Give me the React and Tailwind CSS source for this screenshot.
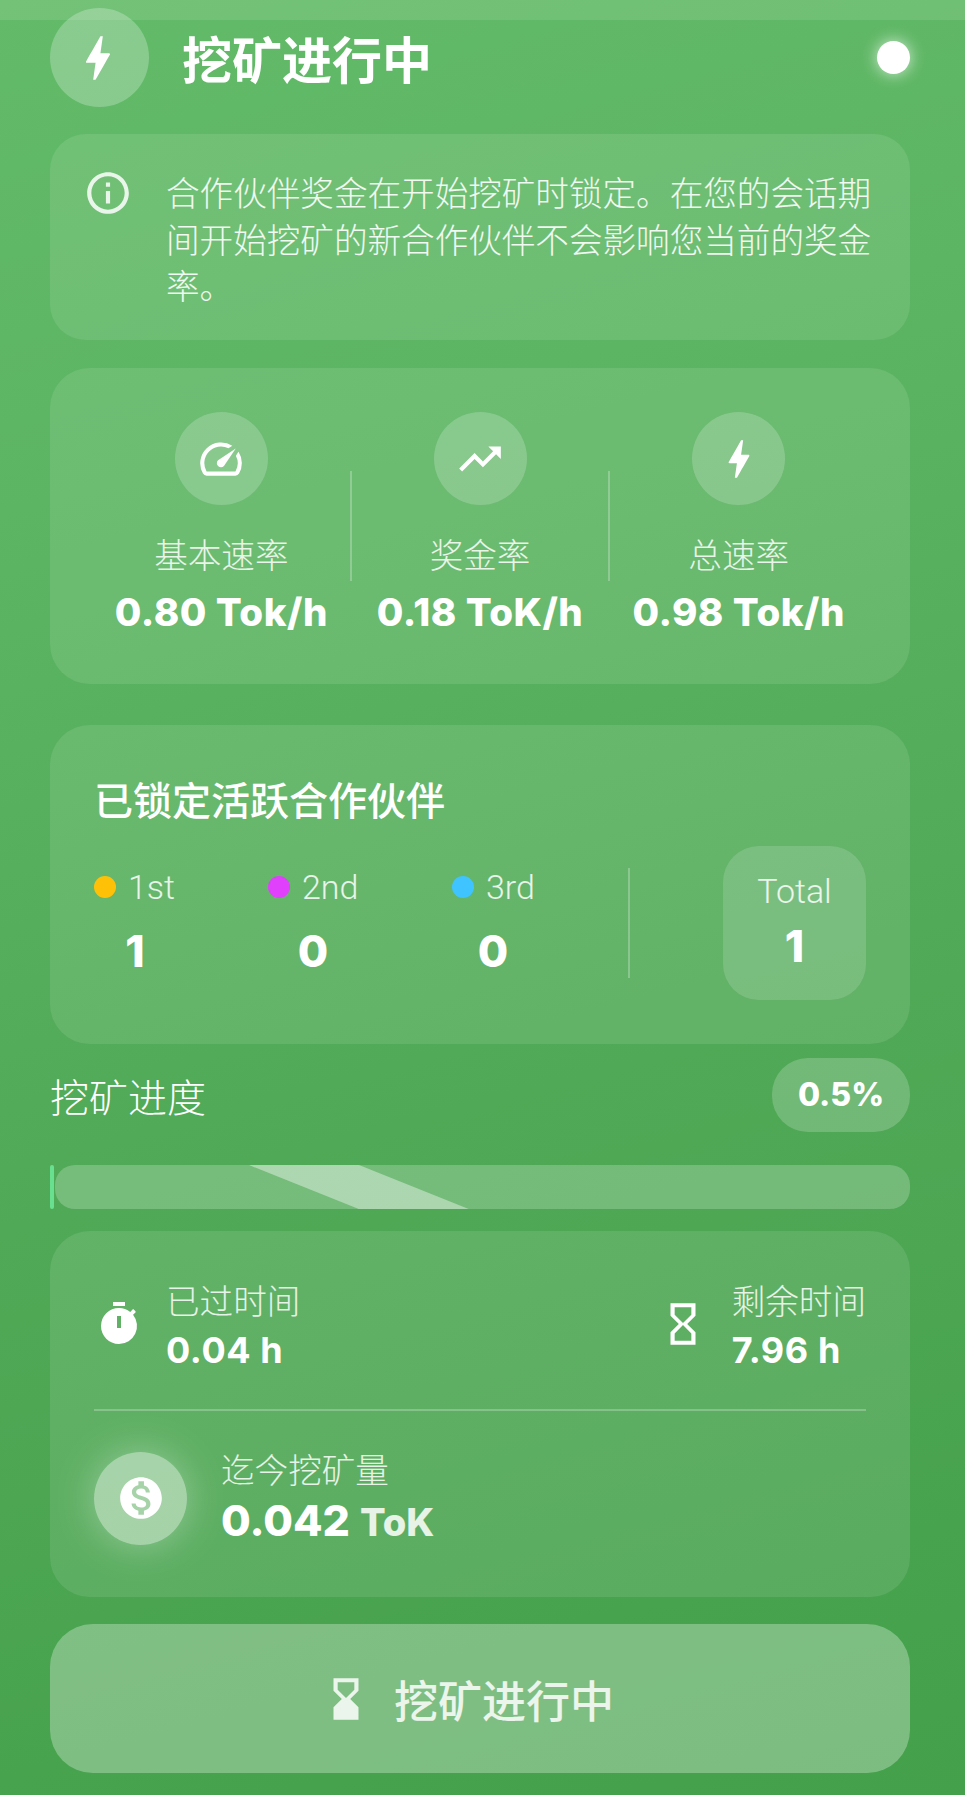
import React from "react";
import { MdBolt, MdInfoOutline, MdSpeed, MdTrendingUp, MdTimer, MdHourglassEmpty, MdHourglassBottom, MdMonetizationOn } from "react-icons/md";

const cjk = "font-['Noto_Sans_CJK_SC','Noto_Sans',sans-serif]";
const num = "font-['Inter','Noto_Sans_CJK_SC',sans-serif]";
const rob = "font-['Roboto','Noto_Sans_CJK_SC',sans-serif]";

function Stat({ icon, label, value }) {
  return (
    <div className="flex-1 flex flex-col items-center">
      <div className="w-[93px] h-[93px] rounded-full bg-white/20 flex items-center justify-center text-white">{icon}</div>
      <div className={`mt-[27px] h-[44px] leading-[44px] text-[33.6px] font-light text-white/85 ${cjk}`}>{label}</div>
      <div className={`mt-[13px] h-[46px] leading-[46px] text-[38.5px] font-extrabold text-white whitespace-nowrap tracking-[0.5px] ${num}`}>{value}</div>
    </div>
  );
}

function Tier({ dot, label, value, width }) {
  return (
    <div className={`flex flex-col items-center ${width}`}>
      <div className="self-start flex items-center h-[44px]">
        <span className={`w-[22px] h-[22px] rounded-full ${dot}`} />
        <span className={`ml-[12px] text-[34px] font-light text-white/85 ${rob}`}>{label}</span>
      </div>
      <div className={`mt-[15px] h-[54px] leading-[54px] text-[44px] font-extrabold text-white ${num}`}>{value}</div>
    </div>
  );
}

export default function App() {
  return (
    <div className="relative w-[965px] h-[1795px] overflow-hidden bg-[linear-gradient(165deg,#63bb69_0%,#5cb562_25%,#50a956_60%,#44a04a_100%)]">
      <div className="absolute top-0 left-0 right-0 h-[20px] bg-white/10" />
      <div className="relative pl-[50px] pr-[55px] pt-[8px]">
        <div className="flex items-center h-[99px]">
          <div className="w-[99px] h-[99px] rounded-full bg-white/25 flex items-center justify-center text-white">
            <MdBolt size={58} className="-ml-[3px]" />
          </div>
          <div className={`ml-[33px] text-[50px] font-semibold text-white ${cjk}`}>挖矿进行中</div>
          <div className="ml-auto w-[33px] h-[33px] rounded-full bg-white shadow-[0_0_16px_rgba(255,255,255,0.75)]" />
        </div>

        <div className="mt-[27px] rounded-[36px] bg-white/10 pl-[37px] pr-[30px] pt-[35px] pb-[31px] flex items-start">
          <MdInfoOutline size={50} className="text-white/85 -mt-[1px] -ml-[4px] shrink-0" />
          <div className={`ml-[33px] text-[33.6px] leading-[46.7px] font-light text-white/90 ${cjk}`}>
            合作伙伴奖金在开始挖矿时锁定。在您的会话期间开始挖矿的新合作伙伴不会影响您当前的奖金率。
          </div>
        </div>

        <div className="mt-[28px] rounded-[40px] bg-white/10 px-[43px] pt-[44px] h-[316px] flex items-start">
          <Stat icon={<MdSpeed size={50} />} label="基本速率" value="0.80 Tok/h" />
          <div className="w-[2px] h-[110px] mt-[59px] bg-white/25 shrink-0" />
          <Stat icon={<MdTrendingUp size={50} />} label="奖金率" value="0.18 ToK/h" />
          <div className="w-[2px] h-[110px] mt-[59px] bg-white/25 shrink-0" />
          <Stat icon={<MdBolt size={50} />} label="总速率" value="0.98 Tok/h" />
        </div>

        <div className="mt-[41px] rounded-[40px] bg-white/10 px-[44px] pt-[45px] h-[319px]">
          <div className={`h-[56px] leading-[56px] text-[39px] font-medium text-white ${cjk}`}>已锁定活跃合作伙伴</div>
          <div className="flex items-start mt-[20px]">
            <div className="flex pt-[19px]">
              <Tier dot="bg-[#ffc107]" label="1st" value="1" width="w-[82px]" />
              <div className="w-[92px]" />
              <Tier dot="bg-[#e040fb]" label="2nd" value="0" width="w-[90px]" />
              <div className="w-[94px]" />
              <Tier dot="bg-[#40c4ff]" label="3rd" value="0" width="w-[82px]" />
            </div>
            <div className="ml-[94px] mt-[22px] w-[2px] h-[110px] bg-white/25" />
            <div className="ml-auto w-[143px] h-[154px] rounded-[36px] bg-white/15 flex flex-col items-center pt-[23px]">
              <div className={`h-[44px] leading-[44px] text-[34px] font-light text-white/85 ${rob}`}>Total</div>
              <div className={`mt-[6px] h-[54px] leading-[54px] text-[44px] font-extrabold text-white ${num}`}>1</div>
            </div>
          </div>
        </div>

        <div className="mt-[14px] flex items-center justify-between h-[74px]">
          <div className={`text-[39px] font-light text-white ${cjk}`}>挖矿进度</div>
          <div className={`w-[138px] h-[74px] rounded-[36px] bg-white/20 flex items-center justify-center text-[32px] font-extrabold text-white ${num}`}>0.5%</div>
        </div>

        <div className="mt-[33px] relative h-[44px] rounded-[20px] bg-white/[0.22] ml-[5px] overflow-hidden">
          <div className="absolute top-0 bottom-0 left-[194px] w-[220px] bg-white/40 [clip-path:polygon(0_0,50%_0,100%_100%,50%_100%)]" />
        </div>
        <div className="absolute left-[50px] top-[1165px] w-[4px] h-[44px] rounded-[2px] bg-[#69e08f]" />

        <div className="mt-[22px] rounded-[40px] bg-white/10 px-[44px] pt-[45px] h-[366px]">
          <div className="flex justify-between h-[95px] items-start">
            <div className="flex items-center">
              <MdTimer size={48} className="text-white ml-[1px]" />
              <div className="ml-[23px]">
                <div className={`h-[48px] leading-[48px] text-[33.6px] font-light text-white/85 ${cjk}`}>已过时间</div>
                <div className={`mt-[5px] h-[42px] leading-[42px] text-[36px] font-bold tracking-[0.6px] text-white whitespace-nowrap ${num}`}>0.04 h</div>
              </div>
            </div>
            <div className="flex items-center">
              <MdHourglassEmpty size={50} className="text-white mr-[24px]" />
              <div>
                <div className={`h-[48px] leading-[48px] text-[33.6px] font-light text-white/85 ${cjk}`}>剩余时间</div>
                <div className={`mt-[5px] h-[42px] leading-[42px] text-[36px] font-bold tracking-[0.6px] text-white whitespace-nowrap ${num}`}>7.96 h</div>
              </div>
            </div>
          </div>
          <div className="mt-[38px] h-[2px] bg-white/25" />
          <div className="mt-[37px] flex items-center">
            <div className="w-[93px] h-[93px] rounded-full bg-white/45 shadow-[0_0_40px_rgba(255,255,255,0.35)] flex items-center justify-center text-white">
              <MdMonetizationOn size={50} />
            </div>
            <div className="ml-[34px]">
              <div className={`h-[44px] leading-[44px] -mt-[1px] text-[33.6px] font-light text-white/85 ${cjk}`}>迄今挖矿量</div>
              <div className="flex items-baseline h-[56px] leading-[56px] mt-[1px]">
                <span className={`text-[43px] font-extrabold text-white ${num}`}>0.042</span>
                <span className={`ml-[10px] text-[38px] font-extrabold text-white/85 ${num}`}>ToK</span>
              </div>
            </div>
          </div>
        </div>

        <div className="mt-[27px] h-[149px] rounded-[43px] bg-white/30 flex items-center justify-center pr-[25px]">
          <MdHourglassBottom size={50} className="text-white/85" />
          <div className={`ml-[23px] text-[44px] font-medium text-white/85 ${cjk}`}>挖矿进行中</div>
        </div>
      </div>
    </div>
  );
}
